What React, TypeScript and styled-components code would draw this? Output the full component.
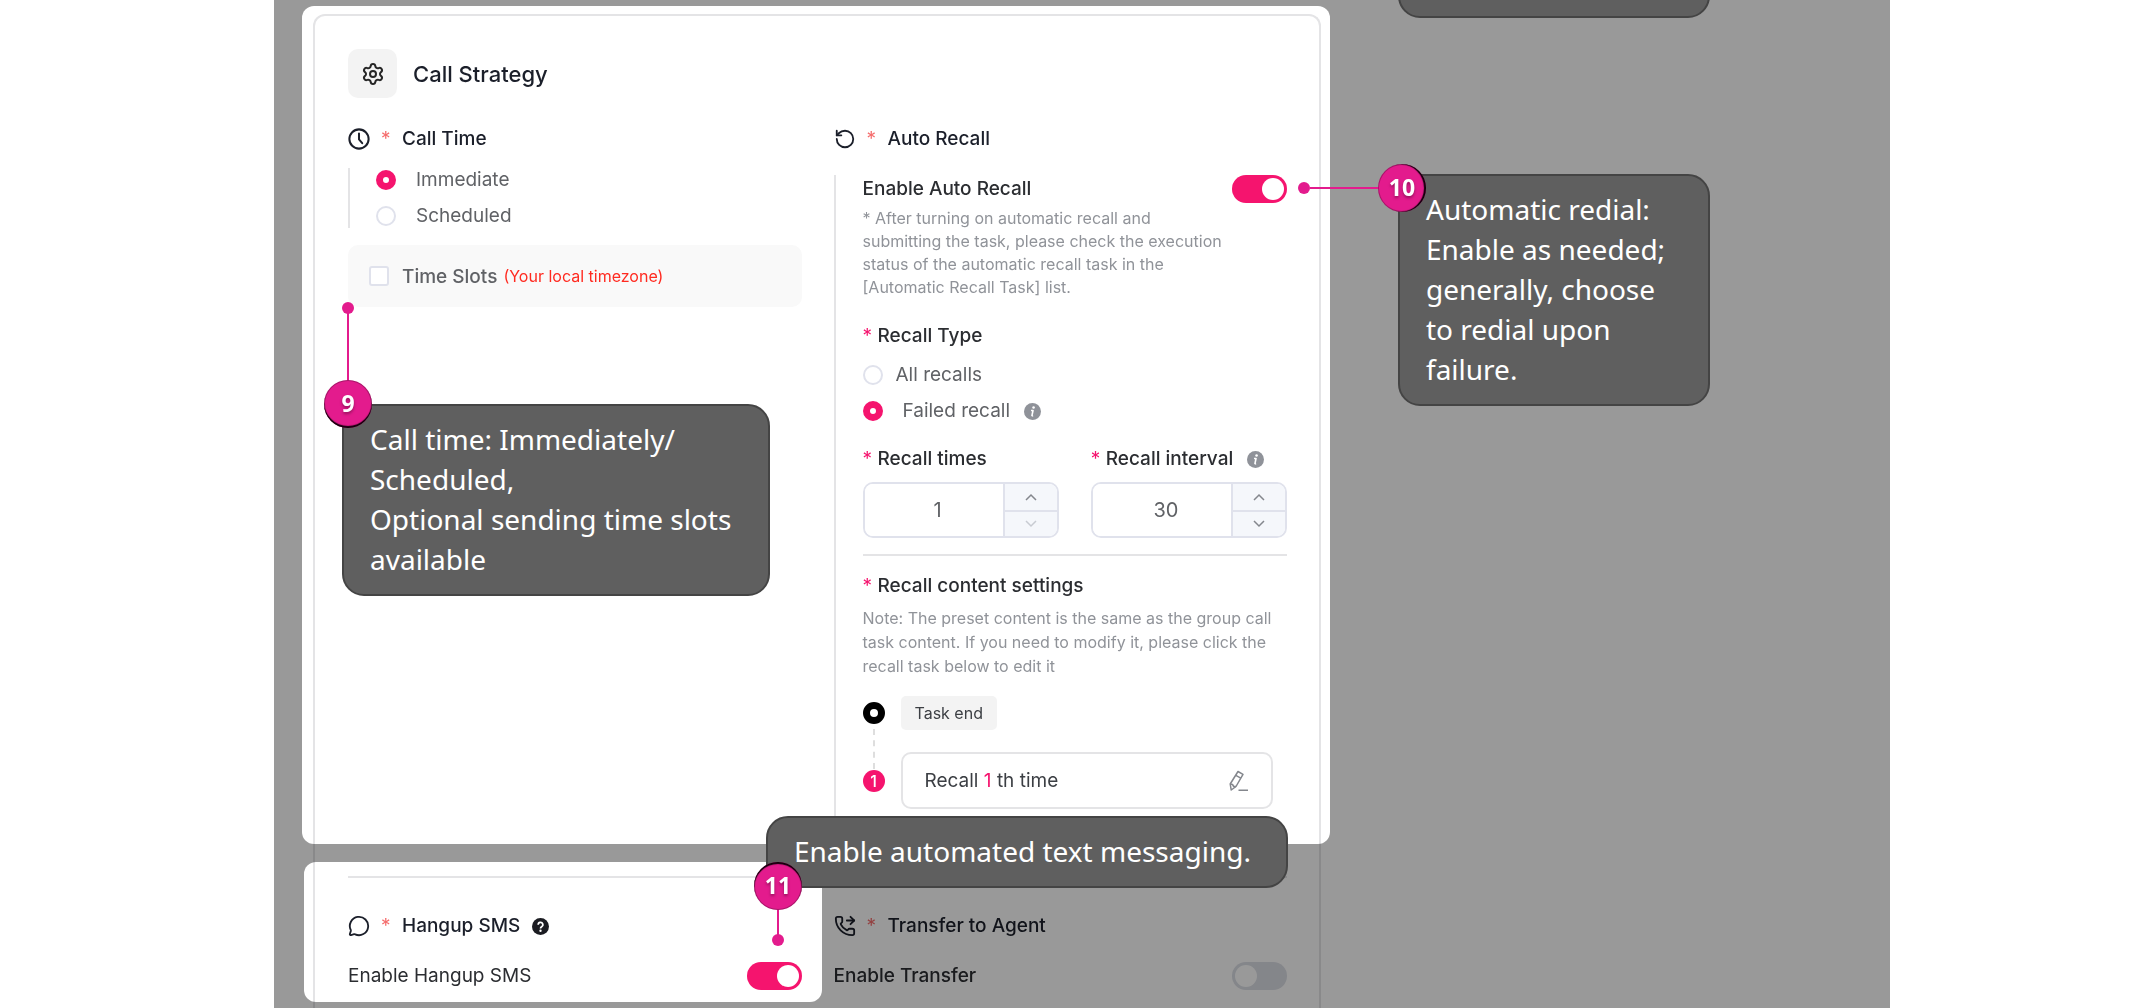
import React, { useState } from "react";
import styled, { createGlobalStyle, css } from "styled-components";
import { MessageCircle, PhoneForwarded, RotateCcw, Settings } from "lucide-react";

const ui = `Inter, "Liberation Sans", sans-serif`;
const note = `"Noto Sans", "Open Sans", sans-serif`;
const pink = "#f5146e";
const marker = "#e31b8d";
const line = "#e4e4e6";
const field = "#e0e2ec";

const GlobalStyle = createGlobalStyle`
  *, *::before, *::after { box-sizing: border-box; }
  body { margin: 0; background: #fff; font-family: ${ui}; }
  h2, h3, p, fieldset { margin: 0; padding: 0; border: 0; min-width: 0; }
`;

/* ---------- page ---------- */

const Page = styled.main`
  display: flex;
  min-height: 100vh;
  padding: 0 258px 0 274px;
`;

const Slide = styled.div`
  position: relative;
  flex: 1;
  isolation: isolate;
  overflow: hidden;
  padding: 14px 39px 0;
  background: #fff;
`;

const Card = styled.div`
  max-width: 1008px;
  min-height: 100%;
  padding: 33px 32px 16px 33px;
  border: 2px solid ${line};
  border-bottom: 0;
  border-radius: 12px 12px 0 0;
`;

const Dim = styled.div`
  position: absolute;
  inset: 0;
  background: #999;
  mix-blend-mode: multiply;
  pointer-events: none;
`;

const Spotlight = styled.div<{ $x: number; $y: number; $w: number; $h: number }>`
  position: absolute;
  left: ${(p) => p.$x}px;
  top: ${(p) => p.$y}px;
  width: ${(p) => p.$w}px;
  height: ${(p) => p.$h}px;
  border-radius: 12px;
  background: #fff;
`;

/* ---------- headings ---------- */

const CardHeader = styled.header`
  display: flex;
  align-items: center;
  gap: 16px;
  margin-bottom: 27px;
`;

const IconTile = styled.span`
  display: grid;
  place-items: center;
  width: 49px;
  height: 49px;
  border-radius: 10px;
  background: #f3f3f3;
  color: #262626;
`;

const CardTitle = styled.h2`
  font-size: 22px;
  line-height: 28px;
  font-weight: 500;
  color: #1b1f2a;
`;

const SectionHeader = styled.div`
  display: flex;
  align-items: center;
  height: 28px;
  color: #1b1f2a;
`;

const SectionTitle = styled.h3`
  font-size: 19px;
  line-height: 28px;
  font-weight: 500;
`;

const Star = styled.span<{ $wide?: boolean }>`
  color: ${(p) => (p.$wide ? "#f56c6c" : pink)};
  font-size: 19px;
  line-height: 28px;
  font-weight: 400;
  width: ${(p) => (p.$wide ? "32px" : "15px")};
  ${(p) => p.$wide && css`padding-left: 11px;`}
`;

const Columns = styled.div`
  display: grid;
  grid-template-columns: 1fr 1fr;
  gap: 32px;
`;

/* ---------- controls ---------- */

const Choices = styled.fieldset<{ $ruled?: boolean }>`
  display: flex;
  flex-direction: column;
  gap: 12px;
  ${(p) =>
    p.$ruled
      ? css`
          margin: 15px 0 17px;
          padding-left: 26px;
          border-left: 2px solid ${line};
        `
      : css`
          margin-top: 13px;
        `}
`;

const Choice = styled.label<{ $gap: number }>`
  display: flex;
  align-items: center;
  gap: ${(p) => p.$gap}px;
  height: 24px;
  font-size: 19px;
  line-height: 24px;
  color: #606266;
`;

const WithIcon = styled.span`
  display: flex;
  align-items: center;
`;

const Radio = styled.input`
  appearance: none;
  flex: none;
  width: 20px;
  height: 20px;
  margin: 0;
  border: 2px solid ${field};
  border-radius: 50%;
  background: #fff;
  &:checked {
    border: 7px solid ${pink};
  }
`;

const SlotBox = styled.label`
  display: flex;
  align-items: center;
  height: 62px;
  padding-left: 21px;
  border-radius: 10px;
  background: #f9f9f9;
  font-size: 19px;
  font-weight: 500;
  color: #606266;
`;

const Tick = styled.input`
  appearance: none;
  width: 20px;
  height: 20px;
  margin: 0 13px 0 0;
  border: 2px solid ${field};
  border-radius: 3px;
  background: #fff;
  &:checked {
    border-color: ${pink};
    background: ${pink};
  }
`;

const Warning = styled.span`
  margin-left: 6px;
  font-size: 16px;
  font-weight: 400;
  color: #ff2a20;
`;

const ToggleRow = styled.label<{ $plain?: boolean }>`
  display: flex;
  align-items: center;
  justify-content: space-between;
  height: 28px;
  font-size: 19px;
  line-height: 28px;
  font-weight: ${(p) => (p.$plain ? 400 : 500)};
  color: #2b2d31;
`;

const Switch = styled.input`
  appearance: none;
  position: relative;
  width: 55px;
  height: 28px;
  margin: 0;
  border-radius: 14px;
  background: #dcdfe6;
  &::before {
    content: "";
    position: absolute;
    top: 3px;
    left: 3px;
    width: 22px;
    height: 22px;
    border-radius: 50%;
    background: #fff;
  }
  &:checked {
    background: ${pink};
  }
  &:checked::before {
    left: 30px;
  }
`;

/* ---------- auto recall ---------- */

const RecallBody = styled.div`
  margin-top: 22px;
  padding: 0 0 51px 27px;
  border-left: 2px solid ${line};
`;

const Hint = styled.p<{ $narrow?: boolean }>`
  max-width: ${(p) => (p.$narrow ? "366px" : "none")};
  margin: ${(p) => (p.$narrow ? "4px 0 23px" : "6px 0 18px")};
  font-size: 16px;
  line-height: ${(p) => (p.$narrow ? 23 : 24)}px;
  color: #909399;
`;

const FieldTitle = styled.div`
  display: flex;
  align-items: center;
  height: 28px;
  font-size: 19px;
  line-height: 28px;
  font-weight: 500;
  color: #2b2d31;
`;

const NumberGrid = styled.div`
  display: grid;
  grid-template-columns: 1fr 1fr;
  gap: 32px;
  margin-top: 22px;
`;

const NumberBox = styled.div`
  display: grid;
  grid-template-columns: 1fr 54px;
  height: 56px;
  margin-top: 9px;
  border: 2px solid ${field};
  border-radius: 10px;
  overflow: hidden;
`;

const NumberInput = styled.input`
  width: 100%;
  min-width: 0;
  border: 0;
  padding: 0 0 0 8px;
  background: #fff;
  text-align: center;
  font: 400 20px/28px ${ui};
  color: #606266;
`;

const Steps = styled.div`
  display: grid;
  grid-template-rows: 1fr 1fr;
  border-left: 2px solid ${field};
`;

const Step = styled.button`
  display: grid;
  place-items: center;
  padding: 0;
  border: 0;
  background: #f5f7fb;
  color: #84878d;
  & + & {
    border-top: 2px solid ${field};
  }
  &:disabled {
    color: #c8cbd2;
  }
`;

const Rule = styled.hr`
  height: 2px;
  margin: 16px 0;
  border: 0;
  background: ${line};
`;

const Timeline = styled.ol`
  display: flex;
  flex-direction: column;
  gap: 22px;
  margin: 0;
  padding: 0;
  list-style: none;
`;

const TimelineItem = styled.li`
  position: relative;
  display: flex;
  align-items: center;
  gap: 16px;
  padding-right: 14px;
  &:first-child::after {
    content: "";
    position: absolute;
    left: 10px;
    top: 33px;
    height: 40px;
    border-left: 2px dashed #dedede;
  }
`;

const EndDot = styled.span`
  flex: none;
  width: 22px;
  height: 22px;
  border: 7px solid #000;
  border-radius: 50%;
`;

const StepDot = styled.span`
  flex: none;
  width: 22px;
  height: 22px;
  border-radius: 50%;
  background: ${pink};
  color: #fff;
  text-align: center;
  font-size: 16px;
  font-weight: 500;
  line-height: 22px;
`;

const Tag = styled.span`
  padding: 0 14px;
  border-radius: 5px;
  background: #f3f3f3;
  font-size: 16px;
  line-height: 34px;
  color: #3c3f44;
`;

const RecallCard = styled.div`
  display: flex;
  flex: 1;
  align-items: center;
  justify-content: space-between;
  height: 57px;
  padding: 0 21px 0 22px;
  border: 2px solid ${line};
  border-radius: 10px;
  font-size: 19px;
  color: #3c3f44;
  em {
    font-style: normal;
    color: ${pink};
  }
`;

const IconButton = styled.button`
  display: grid;
  place-items: center;
  width: 24px;
  height: 24px;
  padding: 0;
  border: 0;
  background: none;
  color: #84878d;
`;

/* ---------- lower sections ---------- */

const Lower = styled(Columns)`
  padding-top: 18px;
`;

const LowerRow = styled(ToggleRow)`
  margin-top: 22px;
`;

/* ---------- annotations ---------- */

const Callout = styled.p<{ $x: number; $y: number; $w: number }>`
  position: absolute;
  left: ${(p) => p.$x}px;
  top: ${(p) => p.$y}px;
  width: ${(p) => p.$w}px;
  min-height: 72px;
  padding: 13px 26px 15px;
  border: 2px solid #444;
  border-radius: 22px;
  background: #5f5f5f;
  color: #fff;
  font: 400 28px/40px ${note};
`;

const Pin = styled.span<{ $x: number; $y: number; $shade: string }>`
  position: absolute;
  left: ${(p) => p.$x}px;
  top: ${(p) => p.$y}px;
  width: 48px;
  height: 48px;
  border-radius: 50%;
  background: ${marker};
  box-shadow: inset 0 0 0 1px rgba(0, 0, 0, 0.25), inset ${(p) => p.$shade} 1px #14000c;
  color: #fff;
  text-align: center;
  text-shadow: 0 2px 3px rgba(0, 0, 0, 0.35);
  font: 700 23px/46px ${note};
`;

const Leader = styled.span<{ $x: number; $y: number; $w: number; $h: number }>`
  position: absolute;
  left: ${(p) => p.$x}px;
  top: ${(p) => p.$y}px;
  width: ${(p) => p.$w}px;
  height: ${(p) => p.$h}px;
  background: ${marker};
`;

const Dot = styled.span<{ $x: number; $y: number }>`
  position: absolute;
  left: ${(p) => p.$x}px;
  top: ${(p) => p.$y}px;
  width: 12px;
  height: 12px;
  border-radius: 50%;
  background: ${marker};
`;

/* ---------- icons ---------- */

const ClockIcon = () => (
  <svg width="22" height="22" viewBox="0 0 24 24" fill="none" stroke="currentColor" strokeWidth="2.2" strokeLinecap="round" strokeLinejoin="round" aria-hidden="true">
    <circle cx="12" cy="12" r="10.5" />
    <path d="M12 6v6.5l3.5 4" />
  </svg>
);

const BadgeSvg = styled.svg<{ $gap: number }>`
  flex: none;
  margin-left: ${(p) => p.$gap}px;
`;

const InfoIcon = () => (
  <BadgeSvg $gap={14} width="17" height="17" viewBox="0 0 16 16" aria-hidden="true">
    <circle cx="8" cy="8" r="8" fill="#8f9299" />
    <circle cx="9" cy="4.3" r="1.2" fill="#fff" />
    <path d="M6.6 7.1h1.9l-1 4.6q-.1.7 1 .1" fill="none" stroke="#fff" strokeWidth="1.5" strokeLinejoin="round" />
  </BadgeSvg>
);

const HelpIcon = () => (
  <BadgeSvg $gap={12} width="17" height="17" viewBox="0 0 16 16" aria-hidden="true">
    <circle cx="8" cy="8" r="8" fill="#1b1c22" />
    <path d="M5.8 6.3a2.2 2.2 0 1 1 3.3 1.9c-.8.5-1.1.8-1.1 1.6" fill="none" stroke="#fff" strokeWidth="1.6" />
    <circle cx="8" cy="12" r="1.1" fill="#fff" />
  </BadgeSvg>
);

const Chevron = ({ down }: { down?: boolean }) => (
  <svg width="12" height="8" viewBox="0 0 12 8" fill="none" stroke="currentColor" strokeWidth="1.5" aria-hidden="true">
    <path d={down ? "M1 1l5 5 5-5" : "M1 7l5-5 5 5"} />
  </svg>
);

const PencilIcon = () => (
  <svg width="22" height="22" viewBox="0 0 22 22" fill="none" stroke="currentColor" strokeWidth="1.5" strokeLinejoin="round" aria-hidden="true">
    <path d="M11 1.500l5 2.800-7 12.200-4.800 3.500-1-6z" />
    <path d="M8.800 5.300l5 2.800M3.200 14l2.300.500 1.200 2 2.300 0M11.500 20.300h9.500" />
  </svg>
);

/* ---------- pieces ---------- */

function Stepper({ id, title, start, min, info }: { id: string; title: string; start: number; min: number; info?: boolean }) {
  const [value, setValue] = useState(start);
  return (
    <div>
      <FieldTitle>
        <Star>*</Star>
        <label htmlFor={id}>{title}</label>
        {info && <InfoIcon />}
      </FieldTitle>
      <NumberBox>
        <NumberInput id={id} inputMode="numeric" value={value} onChange={(e) => setValue(Number(e.target.value) || min)} />
        <Steps>
          <Step type="button" aria-label={`Increase ${title}`} onClick={() => setValue(value + 1)}>
            <Chevron />
          </Step>
          <Step type="button" aria-label={`Decrease ${title}`} disabled={value <= min} onClick={() => setValue(value - 1)}>
            <Chevron down />
          </Step>
        </Steps>
      </NumberBox>
    </div>
  );
}

function CallTime() {
  return (
    <section>
      <SectionHeader>
        <ClockIcon />
        <Star $wide>*</Star>
        <SectionTitle>Call Time</SectionTitle>
      </SectionHeader>
      <Choices $ruled aria-label="Call Time">
        <Choice $gap={20}>
          <Radio type="radio" name="time" defaultChecked />
          Immediate
        </Choice>
        <Choice $gap={20}>
          <Radio type="radio" name="time" />
          Scheduled
        </Choice>
      </Choices>
      <SlotBox>
        <Tick type="checkbox" />
        Time Slots
        <Warning>(Your local timezone)</Warning>
      </SlotBox>
    </section>
  );
}

function AutoRecall() {
  return (
    <section>
      <SectionHeader>
        <RotateCcw size={22} strokeWidth={2} />
        <Star $wide>*</Star>
        <SectionTitle>Auto Recall</SectionTitle>
      </SectionHeader>
      <RecallBody>
        <ToggleRow>
          Enable Auto Recall
          <Switch type="checkbox" role="switch" defaultChecked />
        </ToggleRow>
        <Hint $narrow>
          * After turning on automatic recall and submitting the task, please check the execution status of the
          automatic recall task in the [Automatic Recall Task] list.
        </Hint>
        <FieldTitle>
          <Star>*</Star>Recall Type
        </FieldTitle>
        <Choices aria-label="Recall Type">
          <Choice $gap={13}>
            <Radio type="radio" name="type" />
            All recalls
          </Choice>
          <Choice $gap={20}>
            <Radio type="radio" name="type" defaultChecked />
            <WithIcon>
              Failed recall
              <InfoIcon />
            </WithIcon>
          </Choice>
        </Choices>
        <NumberGrid>
          <Stepper id="times" title="Recall times" start={1} min={1} />
          <Stepper id="interval" title="Recall interval" start={30} min={5} info />
        </NumberGrid>
        <Rule />
        <FieldTitle>
          <Star>*</Star>Recall content settings
        </FieldTitle>
        <Hint>
          Note: The preset content is the same as the group call task content. If you need to modify it, please click
          the recall task below to edit it
        </Hint>
        <Timeline>
          <TimelineItem>
            <EndDot />
            <Tag>Task end</Tag>
          </TimelineItem>
          <TimelineItem>
            <StepDot>1</StepDot>
            <RecallCard>
              <span>
                Recall <em>1</em> th time
              </span>
              <IconButton type="button" aria-label="Edit recall">
                <PencilIcon />
              </IconButton>
            </RecallCard>
          </TimelineItem>
        </Timeline>
      </RecallBody>
    </section>
  );
}

export default function App() {
  return (
    <>
      <GlobalStyle />
      <Page>
        <Slide>
          <Card>
            <CardHeader>
              <IconTile>
                <Settings size={24} strokeWidth={2} />
              </IconTile>
              <CardTitle>Call Strategy</CardTitle>
            </CardHeader>
            <Columns>
              <CallTime />
              <AutoRecall />
            </Columns>
            <Rule />
            <Lower>
              <section>
                <SectionHeader>
                  <MessageCircle size={22} strokeWidth={2} />
                  <Star $wide>*</Star>
                  <SectionTitle>Hangup SMS</SectionTitle>
                  <HelpIcon />
                </SectionHeader>
                <LowerRow $plain>
                  Enable Hangup SMS
                  <Switch type="checkbox" role="switch" defaultChecked />
                </LowerRow>
              </section>
              <section>
                <SectionHeader>
                  <PhoneForwarded size={22} strokeWidth={2} />
                  <Star $wide>*</Star>
                  <SectionTitle>Transfer to Agent</SectionTitle>
                </SectionHeader>
                <LowerRow>
                  Enable Transfer
                  <Switch type="checkbox" role="switch" />
                </LowerRow>
              </section>
            </Lower>
          </Card>

          <Dim>
            <Spotlight $x={28} $y={6} $w={1028} $h={838} />
            <Spotlight $x={30} $y={862} $w={518} $h={140} />
          </Dim>

          <Callout $x={1124} $y={-54} $w={312} />
          <Callout $x={1124} $y={174} $w={312}>
            Automatic redial: Enable as needed; generally, choose to redial upon failure.
          </Callout>
          <Leader $x={1036} $y={187} $w={70} $h={2} />
          <Dot $x={1024} $y={182} />
          <Pin $x={1104} $y={164} $shade="-2px 0">10</Pin>

          <Callout $x={68} $y={404} $w={428}>
            Call time: Immediately/
            <br />
            Scheduled,
            <br />
            Optional sending time slots available
          </Callout>
          <Leader $x={73} $y={308} $w={2} $h={74} />
          <Dot $x={68} $y={302} />
          <Pin $x={50} $y={380} $shade="0 -2px">9</Pin>

          <Callout $x={492} $y={816} $w={522}>Enable automated text messaging.</Callout>
          <Leader $x={503} $y={908} $w={2} $h={30} />
          <Dot $x={498} $y={934} />
          <Pin $x={480} $y={862} $shade="0 2px">11</Pin>
        </Slide>
      </Page>
    </>
  );
}
